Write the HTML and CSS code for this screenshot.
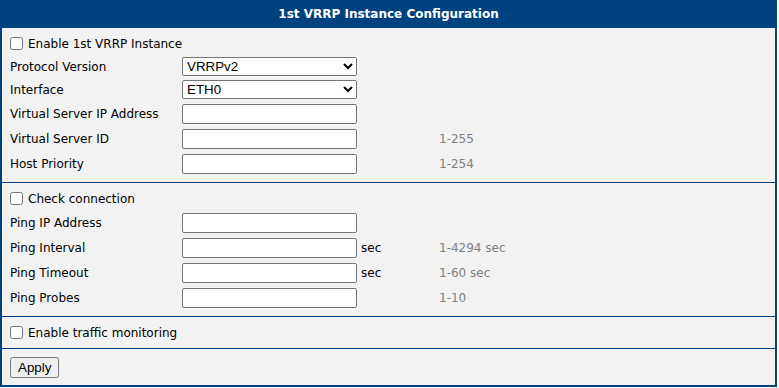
FILE: index.html
```html
<!DOCTYPE html>
<html lang="en">
<head>
    <meta charset="UTF-8">
    <meta name="viewport" content="width=device-width, initial-scale=1.0">
    <title>VRRP Configuration</title>
    <link rel="stylesheet" href="styles.css">
</head>
<body>
    <form class="panel" onsubmit="return false">
        <div class="panel-head">1st VRRP Instance Configuration</div>

        <div class="section">
            <label class="check"><input type="checkbox" id="enabled"> Enable 1st VRRP Instance</label>
            <div class="row row-select">
                <label for="proto" class="label">Protocol Version</label>
                <select id="proto">
                    <option>VRRPv2</option>
                    <option>VRRPv3</option>
                </select>
            </div>
            <div class="row row-select">
                <label for="iface" class="label">Interface</label>
                <select id="iface">
                    <option>ETH0</option>
                    <option>ETH1</option>
                </select>
            </div>
            <div class="row">
                <label for="vip" class="label">Virtual Server IP Address</label>
                <input type="text" id="vip">
            </div>
            <div class="row">
                <label for="vid" class="label">Virtual Server ID</label>
                <input type="text" id="vid">
                <span class="unit"></span>
                <span class="hint">1-255</span>
            </div>
            <div class="row">
                <label for="prio" class="label">Host Priority</label>
                <input type="text" id="prio">
                <span class="unit"></span>
                <span class="hint">1-254</span>
            </div>
        </div>

        <div class="section">
            <label class="check"><input type="checkbox" id="checkconn"> Check connection</label>
            <div class="row">
                <label for="pingip" class="label">Ping IP Address</label>
                <input type="text" id="pingip">
            </div>
            <div class="row">
                <label for="pingint" class="label">Ping Interval</label>
                <input type="text" id="pingint">
                <span class="unit">sec</span>
                <span class="hint">1-4294 sec</span>
            </div>
            <div class="row">
                <label for="pingto" class="label">Ping Timeout</label>
                <input type="text" id="pingto">
                <span class="unit">sec</span>
                <span class="hint">1-60 sec</span>
            </div>
            <div class="row">
                <label for="probes" class="label">Ping Probes</label>
                <input type="text" id="probes">
                <span class="unit"></span>
                <span class="hint">1-10</span>
            </div>
        </div>

        <div class="section section-short">
            <label class="check"><input type="checkbox" id="traffic"> Enable traffic monitoring</label>
        </div>

        <div class="section section-actions">
            <button type="submit">Apply</button>
        </div>
    </form>
</body>
</html>
```

FILE: styles.css
```css
body {
    margin: 0;
    font-family: "DejaVu Sans", Verdana, sans-serif;
    font-size: 12px;
    color: #000;
    background-color: #fff;
}
.panel {
    width: 777px;
    box-sizing: border-box;
    margin: 0;
    border: 2px solid #004280;
    border-top: none;
    background-color: #f2f2f2;
}
.panel-head {
    height: 28px;
    margin: 0 -2px;
    background-color: #004280;
    color: #fff;
    font-weight: bold;
    text-align: center;
    line-height: 28px;
}
.section {
    padding: 4px 8px 6px;
    border-bottom: 1px solid #004280;
}
.section-short {
    padding-bottom: 4px;
}
.section-actions {
    padding: 8px 8px 7px;
    border-bottom: none;
}
.check {
    display: flex;
    align-items: center;
    height: 23px;
}
.check input {
    margin: 0 5px 0 0;
    width: 13px;
    height: 13px;
}
.row {
    display: flex;
    align-items: center;
    height: 25px;
}
.row-select {
    height: 23px;
}
.label {
    width: 172px;
    flex-shrink: 0;
}
.row input,
.row select {
    width: 175px;
    box-sizing: border-box;
    margin: 0;
    font-family: "Liberation Sans", Arial, sans-serif;
    font-size: 13.33px;
}
.row input {
    height: 20px;
    padding: 1px 2px;
    border: 1px solid #767676;
    border-radius: 2px;
    background-color: #fff;
}
.row select {
    height: 19px;
}
.unit {
    width: 78px;
    padding-left: 4px;
    flex-shrink: 0;
}
.hint {
    color: #808080;
}
button {
    font-family: "Liberation Sans", Arial, sans-serif;
    font-size: 13.33px;
    height: 21px;
    padding: 1px 6px;
    margin: 0;
}
```
